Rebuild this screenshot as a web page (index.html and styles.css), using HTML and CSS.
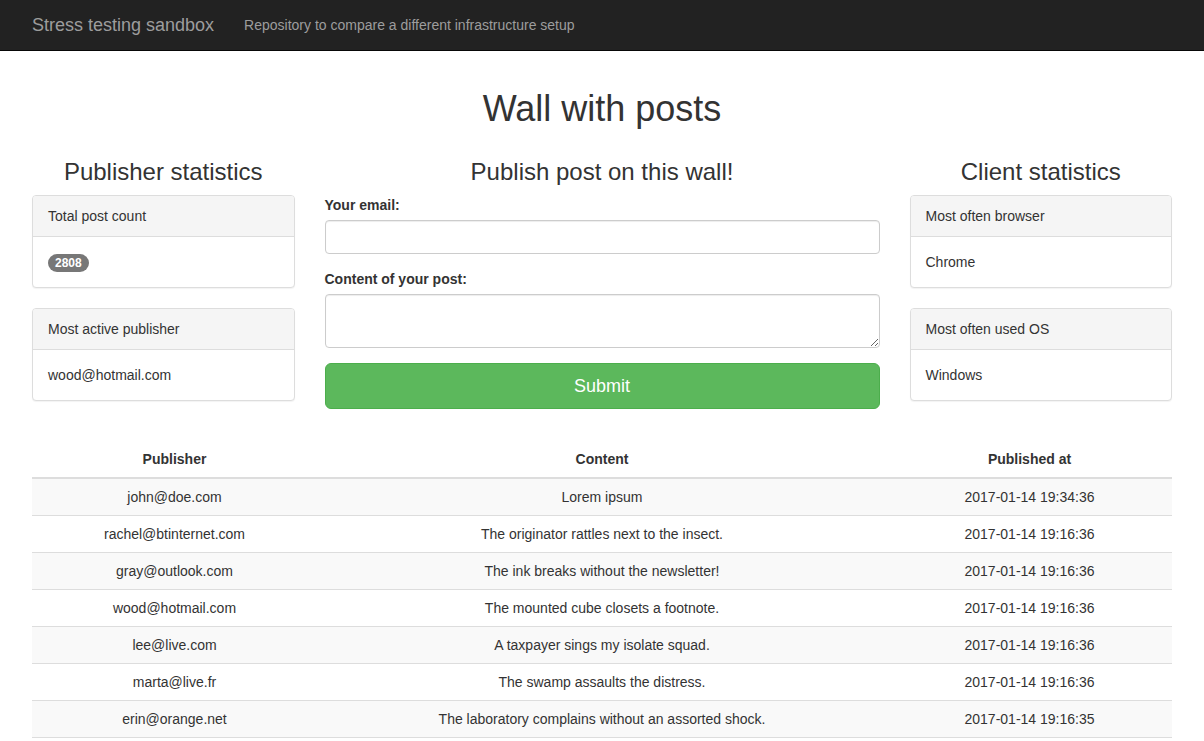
FILE: index.html
```html
<!DOCTYPE html>
<html lang="en">
<head>
<meta charset="utf-8">
<title>Stress testing sandbox</title>
<link rel="stylesheet" href="styles.css">
</head>
<body>
<nav class="navbar">
  <div class="container navbar-inner">
    <a class="navbar-brand" href="#">Stress testing sandbox</a>
    <p class="navbar-text">Repository to compare a different infrastructure setup</p>
  </div>
</nav>
<main class="container page">
  <h1 class="page-title">Wall with posts</h1>
  <div class="row">
    <section class="col col-side">
      <h3 class="col-title">Publisher statistics</h3>
      <div class="panel">
        <div class="panel-heading">Total post count</div>
        <div class="panel-body"><span class="badge">2808</span></div>
      </div>
      <div class="panel">
        <div class="panel-heading">Most active publisher</div>
        <div class="panel-body">wood@hotmail.com</div>
      </div>
    </section>
    <section class="col col-main">
      <h3 class="col-title">Publish post on this wall!</h3>
      <form class="post-form">
        <div class="form-group">
          <label class="form-label" for="email">Your email:</label>
          <input class="form-control" id="email" type="email">
        </div>
        <div class="form-group">
          <label class="form-label" for="content">Content of your post:</label>
          <textarea class="form-control form-textarea" id="content" rows="2"></textarea>
        </div>
        <button class="btn-submit" type="button">Submit</button>
      </form>
    </section>
    <section class="col col-side">
      <h3 class="col-title">Client statistics</h3>
      <div class="panel">
        <div class="panel-heading">Most often browser</div>
        <div class="panel-body">Chrome</div>
      </div>
      <div class="panel">
        <div class="panel-heading">Most often used OS</div>
        <div class="panel-body">Windows</div>
      </div>
    </section>
  </div>
  <table class="posts">
    <colgroup><col class="c-side"><col class="c-main"><col class="c-side"></colgroup>
    <thead>
      <tr><th>Publisher</th><th>Content</th><th>Published at</th></tr>
    </thead>
    <tbody>
      <tr><td>john@doe.com</td><td>Lorem ipsum</td><td>2017-01-14 19:34:36</td></tr>
      <tr><td>rachel@btinternet.com</td><td>The originator rattles next to the insect.</td><td>2017-01-14 19:16:36</td></tr>
      <tr><td>gray@outlook.com</td><td>The ink breaks without the newsletter!</td><td>2017-01-14 19:16:36</td></tr>
      <tr><td>wood@hotmail.com</td><td>The mounted cube closets a footnote.</td><td>2017-01-14 19:16:36</td></tr>
      <tr><td>lee@live.com</td><td>A taxpayer sings my isolate squad.</td><td>2017-01-14 19:16:36</td></tr>
      <tr><td>marta@live.fr</td><td>The swamp assaults the distress.</td><td>2017-01-14 19:16:36</td></tr>
      <tr><td>erin@orange.net</td><td>The laboratory complains without an assorted shock.</td><td>2017-01-14 19:16:35</td></tr>
    </tbody>
  </table>
</main>
</body>
</html>
```
FILE: styles.css
```css
* { box-sizing: border-box; }
html, body { margin: 0; padding: 0; }
body {
  font-family: "Liberation Sans", Arial, Helvetica, sans-serif;
  font-size: 14px;
  line-height: 20px;
  color: #333;
  background: #fff;
}
.container {
  width: 1170px;
  margin: 0 auto;
  padding: 0 15px;
}
.page { display: flow-root; }
.navbar {
  height: 51px;
  background: #222;
  border-bottom: 1px solid #080808;
  margin-bottom: 18px;
}
.navbar-inner {
  display: flex;
  align-items: flex-start;
}
.navbar-brand {
  font-size: 18px;
  line-height: 20px;
  padding: 15px 0;
  height: 50px;
  color: #9d9d9d;
  text-decoration: none;
}
.navbar-text {
  margin: 15px 0 15px 30px;
  color: #9d9d9d;
  font-size: 14px;
  line-height: 20px;
}
.page-title {
  margin: 20px 0 10px;
  font-size: 36px;
  line-height: 39.6px;
  font-weight: 500;
  text-align: center;
}
.row {
  display: flex;
  margin: 0 -15px;
}
.col { padding: 0 15px; }
.col-side { width: 25%; }
.col-main { width: 50%; }
.col-title {
  margin: 20px 0 10px;
  font-size: 24px;
  line-height: 26.4px;
  font-weight: 500;
  text-align: center;
}
.panel {
  border: 1px solid #ddd;
  border-radius: 4px;
  margin-bottom: 20px;
  background: #fff;
  box-shadow: 0 1px 1px rgba(0,0,0,.05);
}
.panel-heading {
  background: #f5f5f5;
  border-bottom: 1px solid #ddd;
  border-radius: 3px 3px 0 0;
  padding: 10px 15px;
}
.panel-body { padding: 15px; }
.badge {
  display: inline-block;
  min-width: 10px;
  padding: 3px 7px;
  font-size: 12px;
  font-weight: bold;
  line-height: 1;
  color: #fff;
  background: #777;
  border-radius: 10px;
  vertical-align: middle;
}
.form-group { margin-bottom: 15px; }
.form-label {
  display: inline-block;
  margin-bottom: 5px;
  font-weight: bold;
}
.form-control {
  display: block;
  width: 100%;
  height: 34px;
  padding: 6px 12px;
  font-family: inherit;
  font-size: 14px;
  line-height: 20px;
  color: #555;
  background: #fff;
  border: 1px solid #ccc;
  border-radius: 4px;
  box-shadow: inset 0 1px 1px rgba(0,0,0,.075);
}
.form-textarea {
  height: 54px;
  resize: vertical;
}
.btn-submit {
  display: block;
  width: 100%;
  padding: 10px 16px;
  font-family: inherit;
  font-size: 18px;
  line-height: 24px;
  color: #fff;
  background: #5cb85c;
  border: 1px solid #4cae4c;
  border-radius: 6px;
  cursor: pointer;
}
.posts {
  width: 100%;
  margin-top: 20px;
  border-collapse: collapse;
  border-spacing: 0;
}
.c-side { width: 25%; }
.c-main { width: 50%; }
.posts th, .posts td {
  padding: 8px;
  line-height: 20px;
  text-align: center;
  vertical-align: top;
}
.posts th {
  font-weight: bold;
  border-bottom: 2px solid #ddd;
}
.posts td { border-top: 1px solid #ddd; }
.posts tbody tr:first-child td { border-top: 0; }
.posts tbody tr:nth-child(odd) { background: #f9f9f9; }
.posts tbody tr:last-child td { border-bottom: 1px solid #ddd; }
```
